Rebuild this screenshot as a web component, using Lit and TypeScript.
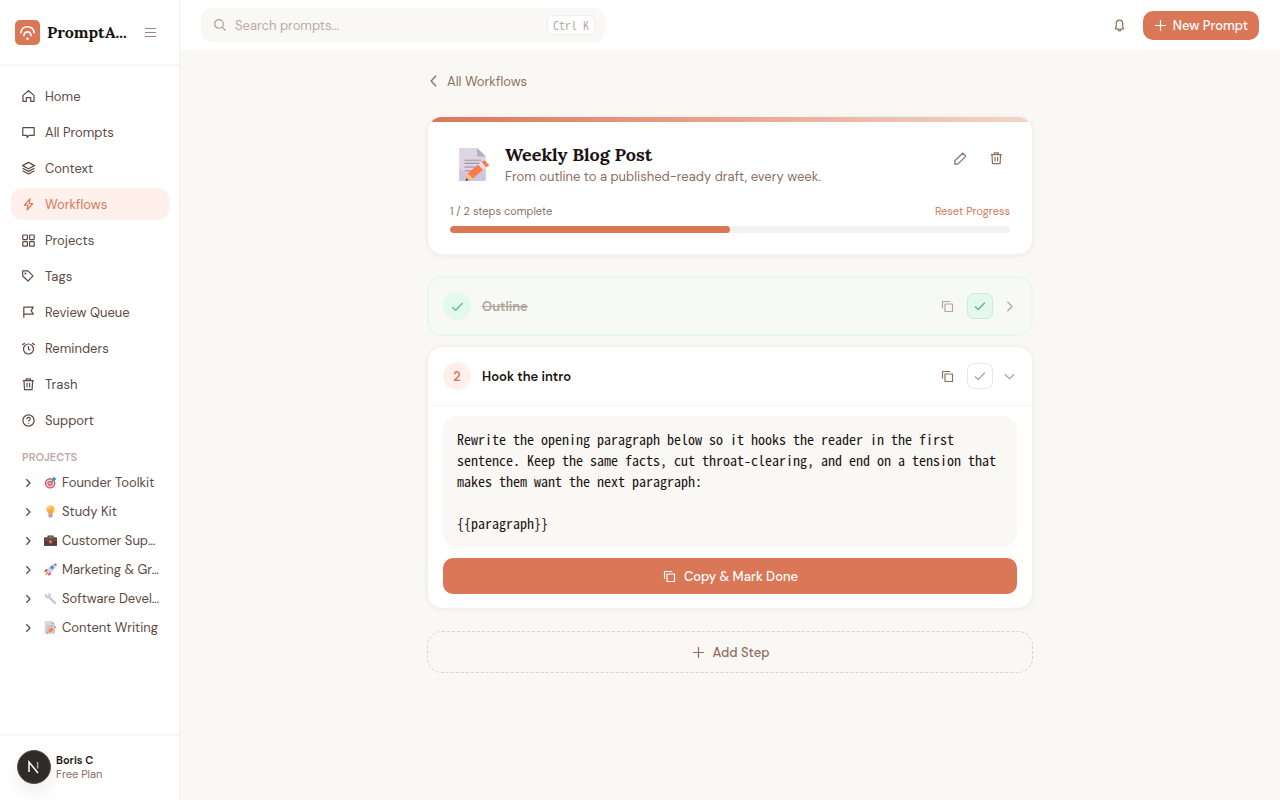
import { LitElement, html, css, svg } from "lit";
import { customElement } from "lit/decorators.js";
import { classMap } from "lit/directives/class-map.js";
import { styleMap } from "lit/directives/style-map.js";

const icons: Record<string, unknown> = {
  home: svg`<path d="M2 6.4 7.5 1.8 13 6.4V12.4H9.7V8.7H5.3V12.4H2Z"/>`,
  chat: svg`<path d="M1.8 2.6H13.2V10.4H8L6 12.6V10.4H1.8Z"/>`,
  layers: svg`<path d="M7.5 1.4 13.4 4.6 7.5 7.8 1.6 4.6ZM1.6 7.2 7.5 10.4 13.4 7.2M1.6 9.8 7.5 13 13.4 9.8"/>`,
  bolt: svg`<path d="M9 1.8 3.4 8.2H7L6 13 11.8 6.6H8.2Z"/>`,
  grid: svg`<rect x="1.8" y="2" width="4.6" height="4.6" rx=".5"/><rect x="8.6" y="2" width="4.6" height="4.6" rx=".5"/><rect x="1.8" y="8.6" width="4.6" height="4.6" rx=".5"/><rect x="8.6" y="8.6" width="4.6" height="4.6" rx=".5"/>`,
  tag: svg`<path d="M1.7 1.8H7L12 6.8 7 12 1.7 7Z"/><circle cx="4.4" cy="4.4" r=".4"/>`,
  flag: svg`<path d="M2.8 12.8V2.2H12.2L10.2 5.6 12.2 9.2H2.8"/>`,
  alarm: svg`<circle cx="7.5" cy="8" r="5"/><path d="M7.5 5V8.2L9.2 9.2M1.3 4 3.8 2M13.7 4 11.2 2"/>`,
  trash: svg`<path d="M1.8 3.6H12.8M5.2 3.4V1.8H9.4V3.4M3 3.8 3.5 12.6H11.1L11.6 3.8M6 6V10.4M8.6 6V10.4"/>`,
  help: svg`<circle cx="7.5" cy="7.5" r="5.6"/><path d="M5.8 6.2C5.8 3.8 9.2 3.9 9.2 6.1 9.2 7.3 7.5 7.2 7.5 8.6M7.5 10V10.8"/>`,
  menu: svg`<path d="M2 3.5H13M2 7.5H13M2 11.5H13"/>`,
  search: svg`<circle cx="6.4" cy="6.4" r="4.6"/><path d="M9.8 9.8 13.4 13.4"/>`,
  bell: svg`<path d="M3.4 11V10.4L4.3 9V5.6C4.3 1 10.7 1 10.7 5.6V9L11.6 10.4V11ZM6 11.6C6 13.4 9 13.4 9 11.6"/>`,
  plus: svg`<path d="M7.5 2V13M2 7.5H13"/>`,
  left: svg`<path d="M9.8 1.8 4.4 7.5 9.8 13.2"/>`,
  right: svg`<path d="M5.4 2.8 10 7.5 5.4 12.2"/>`,
  down: svg`<path d="M2.8 5.2 7.5 9.8 12.2 5.2"/>`,
  check: svg`<path d="M2.2 8 5.6 11.2 12.6 4"/>`,
  copy: svg`<path d="M2.5 9.8V2.5H10.2"/><rect x="5" y="5" width="7.5" height="7.5"/>`,
  pencil: svg`<path d="M1.8 9.8 9.8 2.2 12.8 5.2 4.8 13.2H1.8Z"/>`,
};

const icon = (name: string, size = 15, width = 1.2) => html`<svg
  viewBox="0 0 15 15" width=${size} height=${size} fill="none" stroke="currentColor"
  stroke-width=${width} stroke-linejoin="round" aria-hidden="true">${icons[name]}</svg>`;

const pictures: Record<string, unknown> = {
  target: svg`<circle cx="15" cy="18" r="13" fill="#dc5b62"/><circle cx="15" cy="18" r="9.5" fill="#eadbe4"/><circle cx="15" cy="18" r="6.5" fill="#dc5b62"/><circle cx="15" cy="18" r="3" fill="#eadbe4"/><path d="M14 19 24 9" stroke="#2c6c9e" stroke-width="2"/><path d="M20 7 25 1 27 5 31 7 25 13 20 12Z" fill="#3695d9"/>`,
  bulb: svg`<path d="M16 1C9 1 6 6 6 11 6 16 10 18 11 23H21C22 18 26 16 26 11 26 6 23 1 16 1Z" fill="#ffb748"/><path d="M10 9Q11 4 16 4" stroke="#ffe38a" stroke-width="3" fill="none"/><path d="M14 23V14L11 11M18 23V14L21 11" stroke="#f3803f" stroke-width="1.4" fill="none"/><path d="M11 23H21V28L18 31H14L11 28Z" fill="#a89eaf"/>`,
  briefcase: svg`<path d="M10 9V5H22V9" stroke="#443b42" stroke-width="3" fill="none"/><rect x="0" y="8" width="32" height="21" rx="2" fill="#6d4b44"/><path d="M0 15 16 22 32 15V29H0Z" fill="#563b38"/><rect x="13" y="16" width="6" height="7" rx="1" fill="#f3815c"/>`,
  rocket: svg`<path d="M9 14 2 17 1 22 10 20M18 23 15 30 10 31 12 22" fill="#c64a61"/><path d="M7 20C12 8 20 2 30 1 30 12 23 20 12 25Z" fill="#d9cfe0"/><path d="M24 2 31 1 30 9Z" fill="#e85266"/><circle cx="20" cy="11" r="4" fill="#2c8ed1"/><path d="M7 20 12 25 2 31Z" fill="#ff9047"/>`,
  wrench: svg`<path d="M3 3 8 8 11 7 11 2C17 2 18 8 16 12L29 25C32 29 28 32 25 29L12 16C7 18 1 14 2 7Z" fill="#d3c9da"/><path d="M15 15 26 26" stroke="#b1a5bb" stroke-width="2"/>`,
  memo: svg`<path d="M2 0H19L27 8V31H2Z" fill="#ddd5e3"/><path d="M19 0V8H27Z" fill="#b8adbd"/><path d="M2 19V31H27V16L14 28Z" fill="#cbbcda" opacity=".7"/><path d="M7 11.5H22.5M7 14.5H22.5M7 18H20M7 21.5H15" stroke="#a198a9" stroke-width="1.1"/><path d="M10 24 20 15.5 24.5 20.5 15 28.5 8 31Z" fill="#fa7b48"/><path d="M20 15.5 23 13 27.5 18 24.5 20.5Z" fill="#e6e0ed"/><path d="M23 13 26 11.5 30.5 16.5 27.5 18Z" fill="#fa7b48"/><path d="M10 24 15 28.5 8 31Z" fill="#ffc17d"/><path d="M8.8 28.4 11 30 8 31Z" fill="#443b42"/>`,
};

const picture = (name: string, size: number) => html`<svg
  viewBox="0 0 32 32" width=${size} height=${size} aria-hidden="true">${pictures[name]}</svg>`;

const shared = css`
  :host { font-family: "DM Sans", Inter, sans-serif; color: #1a1210; }
  *, *::before, *::after { box-sizing: border-box; }
  svg { display: block; flex: none; }
  a { color: inherit; text-decoration: none; }
  button { display: flex; align-items: center; justify-content: center; margin: 0; padding: 0; border: 0; background: none; font: inherit; color: inherit; cursor: pointer; }
  h1, h2, p, ul, pre { margin: 0; padding: 0; }
  ul { list-style: none; }
`;

@customElement("side-bar")
class SideBar extends LitElement {
  static styles = [shared, css`
    :host { display: flex; flex-direction: column; background: #fff; border-right: 1px solid #f0f0f0; }
    .brand { display: flex; align-items: center; height: 66px; padding: 0 21px 0 15px; border-bottom: 2px solid #f7f7f7; }
    .logo { margin-right: 7px; }
    .name { flex: 1; font-family: Lora, "Liberation Serif", serif; font-weight: 700; font-size: 16px; line-height: 24px; white-space: nowrap; }
    .menu { color: #a1887f; }
    .nav { display: flex; flex-direction: column; gap: 4px; padding: 14px 10px 0 11px; }
    .link { display: flex; align-items: center; gap: 9px; height: 32px; padding: 0 10px; border-radius: 11px; font-size: 13px; font-weight: 400; color: #5d4a42; }
    .active { background: #fff0eb; color: #d97757; }
    .label { padding: 14px 22px 0; font-size: 11px; line-height: 14px; font-weight: 600; color: #bcaaa4; }
    .projects { padding: 4px 12px 0 22px; }
    .project { display: flex; align-items: center; height: 29px; font-size: 13px; color: #5d4a42; white-space: nowrap; }
    .chevron { margin-right: 10px; }
    .text { margin-left: 5px; }
    .user { display: flex; align-items: center; gap: 5px; margin-top: auto; height: 66px; padding: 0 16px 3px 17px; border-top: 2px solid #f7f7f7; }
    .avatar { display: grid; place-items: center; width: 34px; height: 34px; border-radius: 50%; background: #2e2c2b; border: 1px solid #55524f; box-shadow: 0 8px 18px rgba(0,0,0,.08); color: #fff; }
    .who { font-size: 11px; line-height: 14px; font-weight: 600; }
    .plan { font-weight: 400; color: #8d6e63; }
  `];

  nav = [["home", "Home"], ["chat", "All Prompts"], ["layers", "Context"], ["bolt", "Workflows"], ["grid", "Projects"], ["tag", "Tags"], ["flag", "Review Queue"], ["alarm", "Reminders"], ["trash", "Trash"], ["help", "Support"]];
  projects = [["target", "Founder Toolkit"], ["bulb", "Study Kit"], ["briefcase", "Customer Sup…"], ["rocket", "Marketing & Gr…"], ["wrench", "Software Devel…"], ["memo", "Content Writing"]];

  render() {
    return html`
      <div class="brand">
        <svg class="logo" width="25" height="25" viewBox="0 0 25 25" fill="none" stroke="#fff" stroke-width="1.6" stroke-linecap="round" aria-hidden="true">
          <rect width="25" height="25" rx="5" fill="#d97757" stroke="none"/>
          <path d="M5.8 12.6C7.4 4.8 17.6 4.8 19.2 12.6M8.9 15.6C9.6 10.6 15.4 10.6 16.1 15.6"/>
          <circle cx="12.5" cy="18.8" r="1.3" fill="#fff" stroke="none"/>
        </svg>
        <span class="name">PromptA...</span>
        <button class="menu" aria-label="Collapse sidebar">${icon("menu")}</button>
      </div>
      <nav class="nav">
        ${this.nav.map(([i, t]) => html`<a href="#" class=${classMap({ link: true, active: t === "Workflows" })}>${icon(i)}<span>${t}</span></a>`)}
      </nav>
      <h2 class="label">PROJECTS</h2>
      <ul class="projects">
        ${this.projects.map(([p, t]) => html`<li><a href="#" class="project"><span class="chevron">${icon("right", 12, 1.6)}</span>${picture(p, 13)}<span class="text">${t}</span></a></li>`)}
      </ul>
      <div class="user">
        <div class="avatar"><svg width="14" height="14" viewBox="0 0 14 14" fill="none" stroke="currentColor" stroke-width="1.5" aria-hidden="true"><path d="M2 12V2L11 13"/><path d="M10.6 2V8.6" opacity=".6"/></svg></div>
        <div class="who">Boris C<div class="plan">Free Plan</div></div>
      </div>`;
  }
}

@customElement("top-bar")
class TopBar extends LitElement {
  static styles = [shared, css`
    :host { display: flex; align-items: center; height: 50px; padding: 0 21px; background: #fff; border-bottom: 1px solid #f6f6f5; }
    .search { display: flex; align-items: center; gap: 8px; flex: 0 1 404px; height: 34px; padding: 0 10px 0 12px; border-radius: 11px; background: #faf8f5; color: #b09c95; }
    .input { flex: 1; min-width: 0; border: 0; padding: 0; outline: 0; background: none; font: inherit; font-size: 13px; }
    .input::placeholder { color: #bcaaa4; opacity: 1; }
    .kbd { padding: 0 5px; border: 1px solid #eee; border-radius: 5px; background: #fff; font: 12px/18px Consolas, "Noto Sans Mono CJK SC", "Liberation Mono", monospace; color: #bcaaa4; }
    .bell { margin-left: auto; margin-right: 16px; color: #8d6e63; }
    .new { gap: 5px; height: 29px; padding: 0 11px 0 10px; border-radius: 10px; background: #d97757; color: #fff; font-size: 13px; font-weight: 500; }
  `];
  render() {
    return html`
      <label class="search">${icon("search", 14, 1.3)}<input class="input" type="search" placeholder="Search prompts..." aria-label="Search prompts"><kbd class="kbd">Ctrl K</kbd></label>
      <button class="bell" aria-label="Notifications">${icon("bell")}</button>
      <button class="new">${icon("plus")}New Prompt</button>`;
  }
}

@customElement("workflow-page")
class WorkflowPage extends LitElement {
  static styles = [shared, css`
    :host { display: block; padding: 20px; }
    .column { max-width: 606px; margin: 0 auto; }
    .back { display: flex; align-items: center; gap: 6px; width: fit-content; height: 20px; font-size: 13px; color: #8d6e63; }
    .card { overflow: hidden; margin-top: 25px; border: 1px solid #f3f1ef; border-radius: 15px; background: #fff; box-shadow: 0 1px 5px rgba(0,0,0,.06); }
    .strip { height: 5px; background: linear-gradient(90deg, #d97757, #f5d5c8); }
    .body { padding: 21px 22px; }
    .head { display: flex; align-items: center; gap: 10px; height: 44px; }
    .emoji { padding-left: 7px; width: 45px; }
    .titles { flex: 1; }
    .title { font-family: Lora, "Liberation Serif", serif; font-weight: 700; font-size: 18px; line-height: 24px; }
    .desc { font-size: 13px; line-height: 20px; color: #8d6e63; }
    .tools { display: flex; gap: 8px; padding-bottom: 14px; color: #8d6e63; }
    .tool { width: 28px; height: 28px; }
    .stats { display: flex; justify-content: space-between; margin: 16px 0 7px; font-size: 11px; line-height: 16px; color: #8d6e63; }
    .reset { color: #d97757; }
    .track { height: 7px; border-radius: 4px; background: #f3f2f2; overflow: hidden; }
    .fill { height: 7px; border-radius: 4px; background: #d97757; }
    .step { margin-top: 10px; border: 1px solid #f3f1ef; border-radius: 15px; background: #fff; box-shadow: 0 1px 5px rgba(0,0,0,.06); }
    .done { margin-top: 21px; border: 2px solid #e8f8ee; background: #f7f9f4; box-shadow: none; }
    .row { display: flex; align-items: center; height: 58px; padding: 0 15px; }
    .done .row { height: 56px; padding: 0 14px; }
    .badge { display: grid; place-items: center; width: 28px; height: 28px; margin-right: 11px; border-radius: 50%; background: #fff0eb; color: #d97757; font-size: 13px; font-weight: 600; }
    .done .badge { background: #e4f9ed; color: #65bf8e; }
    .label { flex: 1; font-size: 13px; font-weight: 600; }
    .done .label { color: #b3a19b; text-decoration: line-through; }
    .copy { color: #8d6e63; margin-right: 12px; }
    .done .copy { color: #b9a59e; }
    .tick { width: 26px; height: 26px; margin-right: 9px; border: 1px solid #e8e6e4; border-radius: 7px; color: #b3a19b; }
    .done .tick { background: #e4f9ed; border-color: #c3f0d7; color: #5cb987; }
    .toggle { color: #bcaaa4; }
    .detail { padding: 10px 15px 14px; border-top: 1px solid #f6f5f4; }
    .prompt { padding: 13px 14px; border-radius: 14px; background: #faf8f5; font: 14px/21px Consolas, "Noto Sans Mono CJK SC", "Liberation Mono", monospace; white-space: pre-wrap; }
    .main { gap: 7px; width: 100%; height: 36px; margin-top: 11px; border-radius: 10px; background: #d97757; color: #fff; font-size: 13px; font-weight: 500; }
    .add { gap: 7px; width: 100%; height: 42px; margin-top: 22px; border: 1px dashed #d6d4d2; border-radius: 15px; color: #8d6e63; font-size: 13px; font-weight: 500; }
  `];

  total = 2;
  complete = 1;
  prompt = "Rewrite the opening paragraph below so it hooks the reader in the first sentence. Keep the same facts, cut throat-clearing, and end on a tension that makes them want the next paragraph:\n\n{{paragraph}}";

  render() {
    return html`<div class="column">
      <a class="back" href="#">${icon("left", 14, 1.4)}All Workflows</a>
      <section class="card">
        <div class="strip"></div>
        <div class="body">
          <div class="head">
            <div class="emoji">${picture("memo", 34)}</div>
            <div class="titles"><h1 class="title">Weekly Blog Post</h1><p class="desc">From outline to a published-ready draft, every week.</p></div>
            <div class="tools"><button class="tool" aria-label="Edit workflow">${icon("pencil")}</button><button class="tool" aria-label="Delete workflow">${icon("trash")}</button></div>
          </div>
          <div class="stats"><span>${this.complete} / ${this.total} steps complete</span><button class="reset">Reset Progress</button></div>
          <div class="track"><div class="fill" style=${styleMap({ width: `${(this.complete / this.total) * 100}%` })}></div></div>
        </div>
      </section>
      <section class="step done">
        <div class="row">
          <span class="badge">${icon("check", 15, 1.5)}</span><span class="label">Outline</span>
          <button class="copy" aria-label="Copy">${icon("copy")}</button>
          <button class="tick" aria-label="Mark not done">${icon("check", 14, 1.5)}</button>
          <button class="toggle" aria-label="Expand">${icon("right", 15, 1.4)}</button>
        </div>
      </section>
      <section class="step">
        <div class="row">
          <span class="badge">2</span><span class="label">Hook the intro</span>
          <button class="copy" aria-label="Copy">${icon("copy")}</button>
          <button class="tick" aria-label="Mark done">${icon("check", 14, 1.4)}</button>
          <button class="toggle" aria-label="Collapse">${icon("down", 15, 1.5)}</button>
        </div>
        <div class="detail">
          <pre class="prompt">${this.prompt}</pre>
          <button class="main">${icon("copy")}Copy &amp; Mark Done</button>
        </div>
      </section>
      <button class="add">${icon("plus")}Add Step</button>
    </div>`;
  }
}

@customElement("app-root")
class AppRoot extends LitElement {
  static styles = css`
    :host { display: grid; grid-template-columns: 180px 1fr; min-height: 100vh; background: #faf8f5; }
    .content { min-width: 0; }
  `;
  render() {
    return html`<side-bar></side-bar><div class="content"><top-bar></top-bar><main><workflow-page></workflow-page></main></div>`;
  }
}
